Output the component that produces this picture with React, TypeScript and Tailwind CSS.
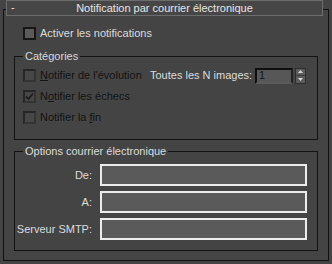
import React from "react";

function Check({ checked, disabled }: { checked?: boolean; disabled?: boolean }) {
  return (
    <div
      className={
        "w-[13px] h-[13px] shrink-0 flex items-center justify-center " +
        (disabled
          ? "border-2 border-[#262626] border-b-[#333333] border-r-[#333333] bg-[#474747]"
          : "border-2 border-[#161616] bg-[#5b5b5b]")
      }
    >
      {checked && (
        <svg width="9" height="9" viewBox="0 0 9 9">
          <path d="M1 4.5 L3.5 7 L8 1.5" stroke="#1a1a1a" strokeWidth="1.6" fill="none" />
        </svg>
      )}
    </div>
  );
}

function DisabledLabel({ pre, u, post }: { pre: string; u: string; post: string }) {
  return (
    <span className="text-[#111111] [text-shadow:1px_1px_0_#4a4a4a] whitespace-nowrap">
      {pre}
      <span className="underline underline-offset-[1px]">{u}</span>
      {post}
    </span>
  );
}

export default function App() {
  return (
    <div className="w-[332px] h-[264px] bg-[#444444] overflow-hidden text-[11px] leading-none text-[#dcdcdc] font-['Liberation_Sans',Arial,sans-serif] pt-[9px] px-[3px]">
      <div className="h-[252px] border border-[#101010] flex flex-col">
        {/* title bar */}
        <div className="-mt-[10px] ml-[2px] mr-[5px] h-[16px] border border-[#6c6c6c] bg-[#464646] flex items-center relative">
          <span className="absolute left-[4px] top-[1px] text-[#e6e6e6]">-</span>
          <span className="flex-1 text-center text-[#e6e6e6]">Notification par courrier électronique</span>
        </div>

        {/* activer */}
        <div className="mt-[11px] pl-[19px] h-[13px] flex items-center gap-[4px]">
          <Check />
          <span className="whitespace-nowrap">Activer les notifications</span>
        </div>

        {/* Catégories group */}
        <div className="mt-[16px] mx-[10px] h-[84px] border border-[#121212] relative pt-[12px] pl-[8px] flex flex-col gap-[8px]">
          <span className="absolute -top-[6px] left-[8px] px-[2px] bg-[#444444] text-[#d4d8dc]">Catégories</span>
          <div className="h-[13px] flex items-center">
            <div className="w-[127px] flex items-center gap-[4px]">
              <Check disabled />
              <DisabledLabel pre="" u="N" post="otifier de l'évolution" />
            </div>
            <span className="w-[105px] whitespace-nowrap">Toutes les N images:</span>
            <div className="w-[38px] h-[16px] border-2 border-[#0e0e0e] border-b-[#5a5a5a] border-r-[#222] bg-[#575757] flex items-center pl-[2px] text-[#151515]">
              1
            </div>
            <div className="ml-[2px] w-[11px] h-[16px] border border-[#2e2e2e] bg-[#5c5c5c] flex flex-col">
              <div className="flex-1 flex items-center justify-center border-b border-[#3a3a3a]">
                <svg width="5" height="3" viewBox="0 0 5 3"><path d="M2.5 0 L5 3 L0 3 Z" fill="#d8d8d8" /></svg>
              </div>
              <div className="flex-1 flex items-center justify-center">
                <svg width="5" height="3" viewBox="0 0 5 3"><path d="M0 0 L5 0 L2.5 3 Z" fill="#d8d8d8" /></svg>
              </div>
            </div>
          </div>
          <div className="h-[13px] flex items-center gap-[4px]">
            <Check disabled checked />
            <DisabledLabel pre="N" u="o" post="tifier les échecs" />
          </div>
          <div className="h-[13px] flex items-center gap-[4px]">
            <Check disabled />
            <DisabledLabel pre="Notifier la " u="f" post="in" />
          </div>
        </div>

        {/* Options group */}
        <div className="mt-[11px] mx-[10px] h-[100px] border border-[#121212] relative pt-[12px] flex flex-col gap-[5px]">
          <span className="absolute -top-[6px] left-[8px] px-[2px] bg-[#444444] text-[#dcdcdc]">Options courrier électronique</span>
          {["De:", "A:", "Serveur SMTP:"].map((l) => (
            <div key={l} className="flex items-center h-[22px]">
              <span className="w-[77px] text-right whitespace-nowrap">{l}</span>
              <div className="ml-[8px] w-[207px] h-[22px] border-2 border-[#ececec] bg-[#5a5a5a]" />
            </div>
          ))}
        </div>
      </div>
    </div>
  );
}
